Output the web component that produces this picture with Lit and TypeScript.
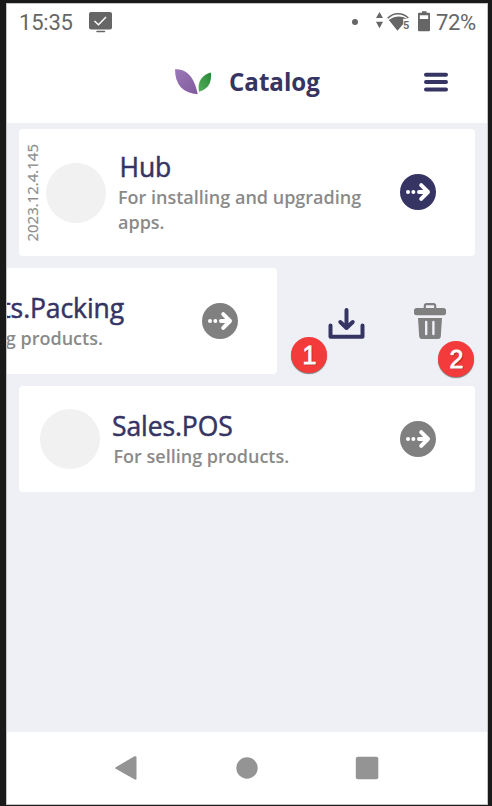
import { LitElement, html, css } from "lit";
import { customElement, property } from "lit/decorators.js";

@customElement("arrow-button")
class ArrowButton extends LitElement {
  static styles = css`
    :host { display: block; width: 36px; height: 36px; flex: none; }
    svg { display: block; }
  `;
  render() {
    return html`<svg width="36" height="36" viewBox="0 0 36 36">
      <circle cx="18" cy="18" r="18" fill="currentColor" />
      <circle cx="8" cy="18" r="2" fill="#fff" />
      <circle cx="13.4" cy="18" r="2" fill="#fff" />
      <path d="M19 18h9M21.2 11.2L28 18l-6.8 6.8" fill="none" stroke="#fff" stroke-width="4" stroke-linecap="round" stroke-linejoin="round" />
    </svg>`;
  }
}

@customElement("app-card")
class AppCard extends LitElement {
  @property() name = "";
  @property() description = "";
  @property() version = "";
  static styles = css`
    :host { display: flex; height: 106px; border-radius: 4px; background: #fff; align-items: center; box-sizing: border-box; padding: 0 39px 0 21px; }
    :host([tall]) { height: 127px; padding-left: 3px; }
    .version { writing-mode: vertical-rl; transform: rotate(180deg); font-size: 15px; line-height: 20px; width: 20px; color: #8c8c8c; -webkit-text-stroke: 0.2px #8c8c8c; margin-right: 4px; white-space: nowrap; }
    .avatar { width: 60px; height: 60px; border-radius: 50%; background: #f1f1f1; flex: none; }
    .text { flex: 1; margin-left: 12px; min-width: 0; padding-top: 1px; }
    .name { font-size: 26.500px; letter-spacing: -0.1px; line-height: 32px; font-weight: 400; -webkit-text-stroke: 0.5px #353463; color: #353463; white-space: nowrap; }
    .desc { font-size: 18px; line-height: 25px; font-weight: 600; color: #8a8a8a; margin: 2px 0 0 1.500px; max-width: 262px; }
    arrow-button { color: #808080; }
    :host([tall]) arrow-button { color: #353463; margin-bottom: 1px; }
    :host([tall]) .name { padding-left: 1.500px; }
    :host([tall]) .desc { margin-left: 0; }
  `;
  render() {
    return html`
      ${this.version ? html`<div class="version">${this.version}</div>` : ""}
      <div class="avatar"></div>
      <div class="text">
        <div class="name">${this.name}</div>
        <div class="desc">${this.description}</div>
      </div>
      <arrow-button></arrow-button>`;
  }
}

@customElement("app-root")
class AppRoot extends LitElement {
  static styles = css`
    :host { display: block; width: 492px; height: 806px; box-sizing: border-box; background: #1a1a1a; padding: 3px 4px 1px 6px; font-family: "Open Sans", "Noto Sans", sans-serif; overflow: hidden; }
    svg { display: block; flex: none; }
    .screen { box-sizing: border-box; height: 802px; border: 1px solid #c4c4c4; background: #eff0f6; display: flex; flex-direction: column; overflow: hidden; }
    .status { height: 38px; background: #fff; display: flex; align-items: center; padding: 0 11px 0 12px; font: 22px/38px Roboto, sans-serif; color: #666; }
    .time { width: 70px; letter-spacing: -0.2px; }
    .space { flex: 1; }
    .level { width: 40px; margin-left: 6px; letter-spacing: -0.4px; }
    .monitor { margin-bottom: 1px; }
    .header { height: 81px; background: #fff; display: flex; align-items: center; padding: 0 39px 2px 168px; margin-bottom: 6px; box-sizing: border-box; }
    .title { font-size: 24.100px; line-height: 34px; font-weight: 700; color: #353463; margin-left: 17px; flex: 1; }
    .list { flex: 1; padding: 0 12px; display: flex; flex-direction: column; gap: 12px; }
    .row { position: relative; }
    .slid { transform: translateX(-198px); }
    .actions { position: absolute; inset: 0; display: flex; align-items: center; justify-content: flex-end; padding-right: 29px; gap: 49.500px; }
    .download { margin-top: 5px; }
    .badge { position: absolute; width: 36px; height: 36px; border-radius: 50%; background: #f43b3b; color: #fff; font: 400 25px/36px "Liberation Sans", sans-serif; -webkit-text-stroke: 0.8px #fff; text-align: center; box-shadow: 0 1px 1px #777; text-shadow: 1px 1px 1px #8a2020; }
    .one { left: 272.400px; top: 69.400px; }
    .two { left: 419.400px; top: 73.400px; }
    .nav { height: 72px; background: #fff; display: flex; align-items: center; padding-left: 107.500px; box-sizing: border-box; }
    .home { margin-left: 98.500px; }
    .recent { margin-left: 96px; }
  `;

  render() {
    return html`<div class="screen">
      <div class="status">
        <span class="time">15:35</span>
        <svg class="monitor" width="23" height="21" viewBox="0 0 23 21">
          <rect width="23" height="17.500" rx="2" fill="#666" />
          <path d="M5.500 9l4 3.800L17 5" fill="none" stroke="#fff" stroke-width="1.500" />
          <path d="M8 19.500h7.500" stroke="#666" stroke-width="1.500" stroke-linecap="round" />
        </svg>
        <span class="space"></span>
        <svg width="80" height="32" viewBox="350 6.500 80 32" fill="#666">
          <circle cx="355" cy="21.500" r="3" />
          <path d="M376 17.600L379.500 11.500 383 17.600zM376 21.200h7l-3.500 6.500z" />
          <path d="M387.700 17.800C393.500 11.800 402.500 11.800 408.300 17.500" fill="none" stroke="#666" stroke-width="1.600" />
          <path d="M388.800 19.500C395 15.200 401.500 15.200 406.800 18.300H403.200V23.500L397.500 30.300z" />
          <text x="403" y="28.800" font-size="11" font-weight="600">5</text>
          <path d="M419 12.300h3v-1.500h4.500v1.500h2.500q1 0 1 1v16.500q0 1-1 1h-10q-1 0-1-1v-16.500q0-1 1-1zM419.800 14.800v3.700h8.400v-3.700z" fill-rule="evenodd" />
        </svg>
        <span class="level">72%</span>
      </div>
      <div class="header">
        <svg width="37" height="26" viewBox="0 0 37 26">
          <defs>
            <linearGradient id="v" x2="1" y2="1"><stop stop-color="#9b79b8" /><stop offset="1" stop-color="#81599c" /></linearGradient>
            <linearGradient id="g" x1="1" x2="0" y2="1"><stop stop-color="#278738" /><stop offset="1" stop-color="#55ae5b" /></linearGradient>
          </defs>
          <path d="M0 .3C10 .2 18.500 5 22.700 25.200C8 24 0 16 0 .3z" fill="url(#v)" />
          <path d="M36 3.500C27 6 22 12.500 24 22.800C34 19.500 36.500 14 36 3.500z" fill="url(#g)" />
        </svg>
        <div class="title">Catalog</div>
        <svg width="24" height="20" viewBox="0 0 24 20"><path d="M2 2.700h20M2 10.100h20M2 17.500h20" stroke="#353463" stroke-width="4" stroke-linecap="round" /></svg>
      </div>
      <div class="list">
        <app-card tall version="2023.12.4.145" name="Hub" description="For installing and upgrading apps."></app-card>
        <div class="row">
          <div class="actions">
            <svg class="download" width="37" height="32" viewBox="0 0 37 32" fill="none" stroke="#353463" stroke-width="4" stroke-linecap="round" stroke-linejoin="round">
              <path d="M2.500 17.500v11.200h32v-11.200" /><path d="M18.500 2v18M12.300 14l6.200 6 6.200-6" />
            </svg>
            <svg width="32" height="36" viewBox="0 0 32 36" fill="#808080">
              <path d="M10.800 6V3q0-1.800 1.800-1.800h6.800Q21.200 1.200 21.200 3v3" fill="none" stroke="#808080" stroke-width="2.200" />
              <rect y="5" width="32" height="7.300" rx="2.500" />
              <path fill-rule="evenodd" d="M4 15h24l-1.200 18.500Q26.600 36 24 36H8Q5.400 36 5.200 33.500zM11 19v12q0 1.200 1.200 1.200t1.200-1.200V19q0-1.200-1.200-1.200T11 19zM18.200 19v12q0 1.200 1.200 1.200t1.200-1.200V19q0-1.200-1.200-1.200T18.200 19z" />
            </svg>
          </div>
          <app-card class="slid" name="Products.Packing" description="For packing products."></app-card>
          <div class="badge one">1</div>
          <div class="badge two">2</div>
        </div>
        <app-card name="Sales.POS" description="For selling products."></app-card>
      </div>
      <div class="nav">
        <svg width="22" height="24" viewBox="0 0 22 24" fill="#949494"><path d="M.7 11.200L19.500.3Q21.500-.3 21.500 1.500v21q0 1.500-1.700 1L.7 12.800q-1-.8 0-1.600z" /></svg>
        <svg class="home" width="24" height="22" viewBox="0 0 24 22"><circle cx="12" cy="11" r="10.700" fill="#949494" /></svg>
        <svg class="recent" width="24" height="24" viewBox="0 0 24 24"><rect x=".8" y=".8" width="22.500" height="22.500" rx="2" fill="#949494" /></svg>
      </div>
    </div>`;
  }
}
